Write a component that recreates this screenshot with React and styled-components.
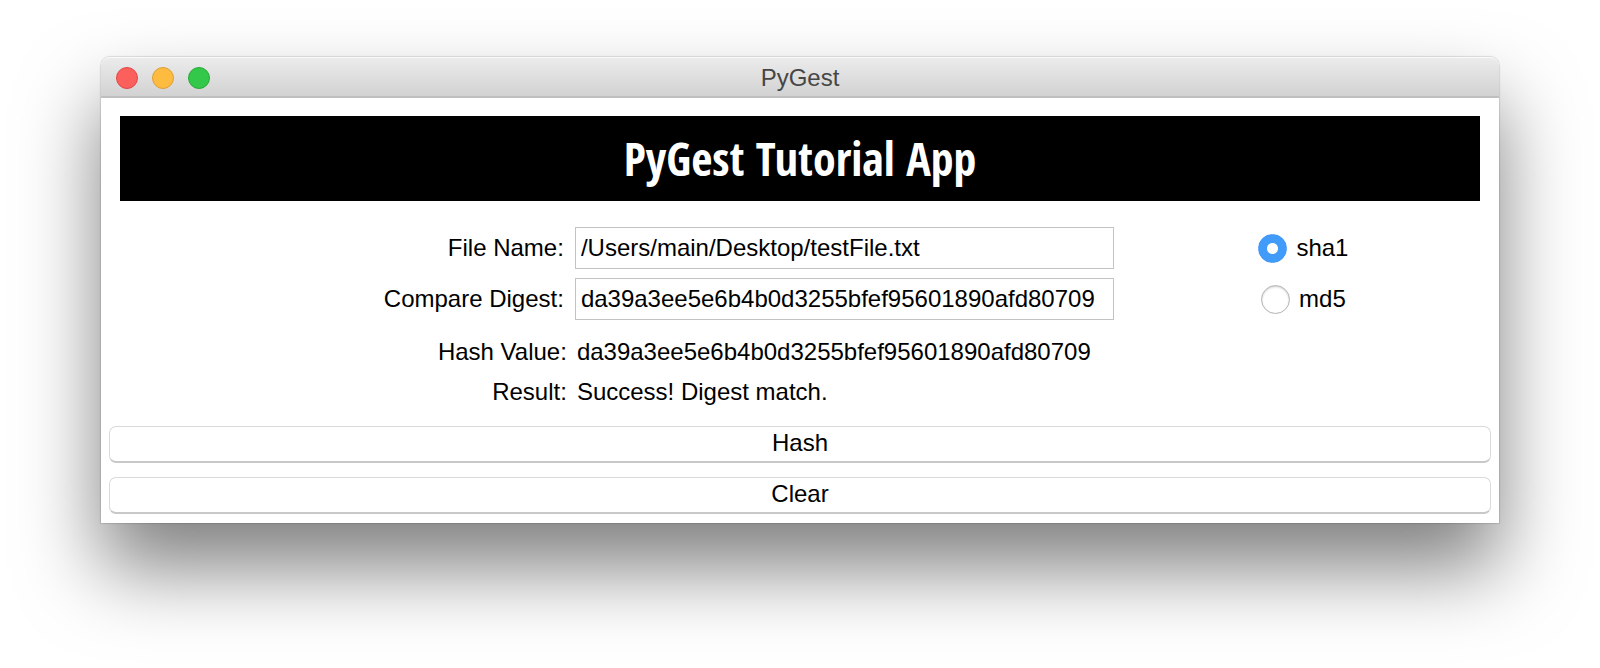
import React, { useState } from "react";
import styled, { createGlobalStyle } from "styled-components";

const DIGEST = "da39a3ee5e6b4b0d3255bfef95601890afd80709";

const App = () => {
  const [fileName, setFileName] = useState("/Users/main/Desktop/testFile.txt");
  const [compare, setCompare] = useState(DIGEST);
  const [method, setMethod] = useState("sha1");
  const [hashValue, setHashValue] = useState(DIGEST);
  const [result, setResult] = useState("Success! Digest match.");

  const onHash = (e) => {
    e.preventDefault();
    setHashValue(DIGEST);
    setResult(
      compare === DIGEST ? "Success! Digest match." : "Digests don't match."
    );
  };
  const onClear = () => {
    setFileName("");
    setCompare("");
    setHashValue("");
    setResult("");
  };

  return (
    <Desktop>
      <GlobalStyle />
      <Window>
        <TitleBar>
          <Lights>
            <Light type="button" aria-label="Close" $bg="#fc605c" $line="#df4744" />
            <Light type="button" aria-label="Minimize" $bg="#fdbc40" $line="#de9f34" />
            <Light type="button" aria-label="Zoom" $bg="#34c84a" $line="#27aa35" />
          </Lights>
          <Title>PyGest</Title>
        </TitleBar>

        <Banner>PyGest Tutorial App</Banner>

        <form onSubmit={onHash}>
          <Fields>
            <Label htmlFor="fileName">File Name:</Label>
            <TextBox
              id="fileName"
              type="text"
              spellCheck={false}
              value={fileName}
              onChange={(e) => setFileName(e.target.value)}
            />
            <RadioLabel>
              <Radio
                type="radio"
                name="method"
                checked={method === "sha1"}
                onChange={() => setMethod("sha1")}
              />
              sha1
            </RadioLabel>

            <Label htmlFor="compare">Compare Digest:</Label>
            <TextBox
              id="compare"
              type="text"
              spellCheck={false}
              value={compare}
              onChange={(e) => setCompare(e.target.value)}
            />
            <RadioLabel>
              <Radio
                type="radio"
                name="method"
                checked={method === "md5"}
                onChange={() => setMethod("md5")}
              />
              md5
            </RadioLabel>
          </Fields>

          <Results>
            <ResultLabel htmlFor="hashValue">Hash Value:</ResultLabel>
            <Output id="hashValue">{hashValue}</Output>
            <ResultLabel htmlFor="result">Result:</ResultLabel>
            <Output id="result">{result}</Output>
          </Results>

          <Buttons>
            <Button type="submit">Hash</Button>
            <Button type="button" onClick={onClear}>
              Clear
            </Button>
          </Buttons>
        </form>
      </Window>
    </Desktop>
  );
};

export default App;

const GlobalStyle = createGlobalStyle`
  * {
    box-sizing: border-box;
  }
  body {
    margin: 0;
    background: #fff;
    color: #000;
    font-family: "Liberation Sans", Arial, sans-serif;
    font-size: 24px;
  }
  button, input {
    font: inherit;
    color: inherit;
  }
`;
const Desktop = styled.div`
  min-height: 100vh;
  padding: 57px 101px 80px;
  overflow: hidden;
`;
const Window = styled.main`
  background: #fff;
  border-radius: 9px 9px 0 0;
  box-shadow: 0 0 1px 1px rgba(0, 0, 0, 0.12),
    0 45px 80px rgba(0, 0, 0, 0.5);
`;
const TitleBar = styled.header`
  display: grid;
  grid-template-columns: 1fr auto 1fr;
  align-items: center;
  height: 41px;
  padding: 2px 15px 0;
  background: linear-gradient(#ececec, #d2d2d2);
  border-bottom: 2px solid #bfbfbf;
  border-radius: 9px 9px 0 0;
  box-shadow: inset 0 2px 0 -1px #fafafa;
`;
const Lights = styled.div`
  display: flex;
  gap: 14px;
`;
const Light = styled.button`
  width: 22px;
  height: 22px;
  padding: 0;
  border: 1px solid ${(props) => props.$line};
  border-radius: 50%;
  background: ${(props) => props.$bg};
`;
const Title = styled.span`
  color: #464646;
`;
const Banner = styled.h1`
  height: 85px;
  margin: 18px 19px 26px;
  background: #000;
  color: #fff;
  font-family: "Open Sans Condensed", "Open Sans", sans-serif;
  font-size: 46px;
  font-weight: 700;
  line-height: 85px;
  text-align: center;
`;
const Fields = styled.div`
  display: grid;
  grid-template-columns: 5fr minmax(0, 539px) 4fr;
  grid-auto-rows: 42px;
  row-gap: 9px;
  align-items: center;
  padding-right: 6px;
`;
const Results = styled(Fields)`
  grid-auto-rows: 40px;
  row-gap: 0;
  margin: 12px 0 14px;
`;
const Label = styled.label`
  padding-right: 11px;
  text-align: right;
`;
const ResultLabel = styled(Label)`
  padding-right: 8px;
`;
const Output = styled.output`
  grid-column: 2 / 4;
  padding-left: 2px;
`;
const TextBox = styled.input`
  width: 100%;
  height: 42px;
  padding: 0 5px;
  border: 1px solid #c3c3c3;
  border-radius: 0;
  background: #fff;
  outline: none;
`;
const RadioLabel = styled.label`
  display: flex;
  justify-content: center;
  align-items: center;
  gap: 9px;
`;
const Radio = styled.input`
  appearance: none;
  width: 29px;
  height: 29px;
  margin: 0;
  border: 1px solid #b4b4b4;
  border-radius: 50%;
  background: #fff;
  box-shadow: inset 0 1px 2px rgba(0, 0, 0, 0.2);
  &:checked {
    border-color: #3f97f7;
    background: radial-gradient(circle, #fff 5px, #419bf9 6px);
    box-shadow: none;
  }
`;
const Buttons = styled.div`
  display: flex;
  flex-direction: column;
  gap: 14px;
  padding: 0 8px 9px;
`;
const Button = styled.button`
  height: 37px;
  padding: 0 0 2px;
  border: 1px solid #dadada;
  border-bottom: 2px solid #c8c8c8;
  border-radius: 7px;
  background: #fff;
`;
